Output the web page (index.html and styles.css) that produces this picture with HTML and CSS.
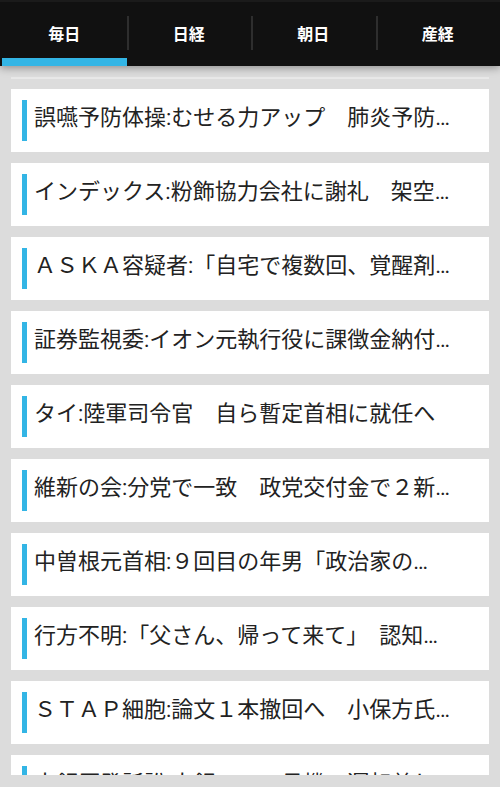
FILE: index.html
```html
<!DOCTYPE html>
<html lang="ja">
<head>
  <meta charset="UTF-8" />
  <meta name="viewport" content="width=device-width, initial-scale=1.0"/>
  <title>ニュース</title>
  <link rel="stylesheet" href="styles.css">
</head>
<body>

<!-- Tabs -->
<nav class="tabs">
  <div class="tab active">毎日</div>
  <div class="tab">日経</div>
  <div class="tab">朝日</div>
  <div class="tab">産経</div>
</nav>

<!-- Headlines -->
<section class="feed">
  <div class="feed-top"></div>
  <div class="card"><span class="bar"></span><p class="title">誤嚥予防体操:むせる力アップ　肺炎予防…</p></div>
  <div class="card"><span class="bar"></span><p class="title">インデックス:粉飾協力会社に謝礼　架空…</p></div>
  <div class="card"><span class="bar"></span><p class="title">ＡＳＫＡ容疑者:「自宅で複数回、覚醒剤…</p></div>
  <div class="card"><span class="bar"></span><p class="title">証券監視委:イオン元執行役に課徴金納付…</p></div>
  <div class="card"><span class="bar"></span><p class="title">タイ:陸軍司令官　自ら暫定首相に就任へ</p></div>
  <div class="card"><span class="bar"></span><p class="title">維新の会:分党で一致　政党交付金で２新…</p></div>
  <div class="card"><span class="bar"></span><p class="title">中曽根元首相:９回目の年男「政治家の…</p></div>
  <div class="card"><span class="bar"></span><p class="title">行方不明:「父さん、帰って来て」　認知…</p></div>
  <div class="card"><span class="bar"></span><p class="title">ＳＴＡＰ細胞:論文１本撤回へ　小保方氏…</p></div>
  <div class="card"><span class="bar"></span><p class="title">大飯原発訴訟:大飯３、４号機の運転差し…</p></div>
</section>

</body>
</html>
```

FILE: styles.css
```css
body {
  margin: 0;
  background: #dcdcdc;
  font-family: Roboto, "Noto Sans CJK JP", sans-serif;
  color: #222;
}
.tabs {
  display: flex;
  height: 66px;
  background: #111;
  border-top: 2px solid #1b1b1b;
  box-sizing: border-box;
  box-shadow: 0 2px 8px rgba(0,0,0,0.35);
  position: relative;
}
.tab {
  flex: 1;
  display: flex;
  align-items: center;
  justify-content: center;
  padding-top: 6px;
  color: #fff;
  font-size: 16px;
  font-weight: bold;
  position: relative;
  border-bottom: 8px solid transparent;
}
.tab + .tab::before {
  content: "";
  position: absolute;
  left: 0;
  top: 14px;
  height: 34px;
  width: 2px;
  background: #2e2e2e;
}
.tab.active {
  border-bottom-color: #33b5e5;
  margin-left: 2px;
}
.feed {
  margin: 11px 11px 0;
  height: 698px;
  overflow: hidden;
}
.feed-top {
  height: 2px;
  background: #e8e8e8;
  margin-bottom: 10px;
}
.card {
  display: flex;
  height: 63px;
  box-sizing: border-box;
  padding: 11px 33px 11px 11px;
  margin-bottom: 11px;
  background: #fff;
}
.bar {
  flex: none;
  width: 5px;
  margin-right: 7px;
  background: #33b5e5;
}
.title {
  margin: 0;
  padding-bottom: 5px;
  font-size: 22px;
  line-height: 36px;
  white-space: nowrap;
  overflow: hidden;
  text-overflow: ellipsis;
}
```
